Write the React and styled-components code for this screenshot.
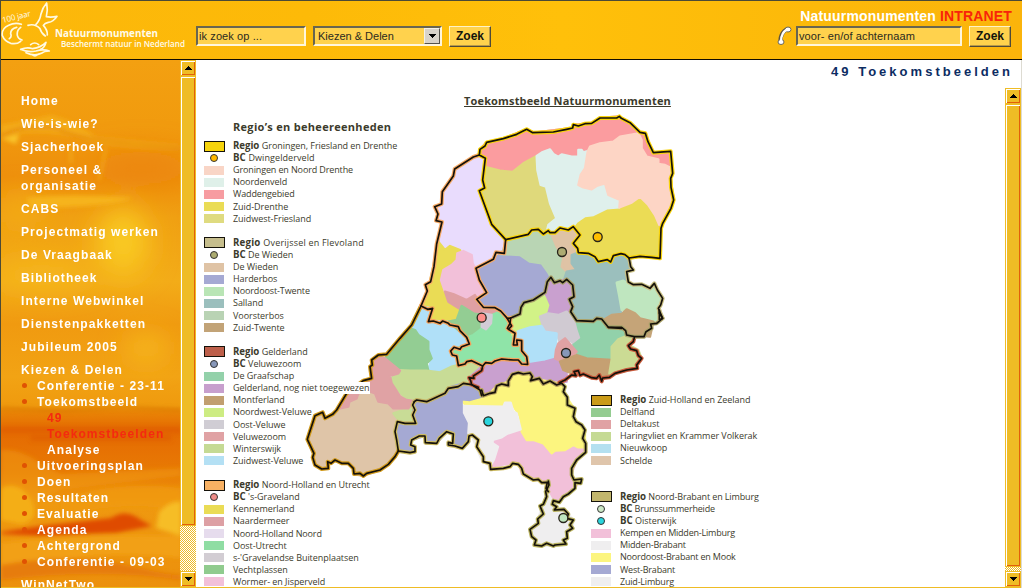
import React from "react";
import styled, { createGlobalStyle, css } from "styled-components";

const GlobalStyle = createGlobalStyle`
  * { box-sizing: border-box; }
  body { margin: 0; overflow: hidden; font-family: "Liberation Sans", Arial, sans-serif; }
`;

const gold = "#efbc25";

const Page = styled.div`
  width: 1022px;
  height: 588px;
  display: flex;
  flex-direction: column;
  border-top: 1px solid #4b4a36;
  border-left: 1px solid #4b4a36;
  background: #fff;
  overflow: hidden;
`;

/* ---------- header ---------- */
const Header = styled.header`
  height: 59px;
  flex: none;
  display: flex;
  border-bottom: 1px solid #120c00;
  background: linear-gradient(90deg, #fcb70b 0, #fdba08 30%, #ffc00a 55%, #fcb90a 80%, #fbb40b 100%);
`;
const Logo = styled.svg`
  width: 195px;
  height: 58px;
  flex: none;
`;
const SearchForm = styled.div`
  display: flex;
  align-items: flex-start;
  padding-top: 25px;
`;
const sunken = css`
  height: 20px;
  flex: none;
  border: 2px solid;
  border-color: #686550 #fff6dc #fff6dc #686550;
  background: #ffd24d;
  color: #2b2a20;
  font-size: 11px;
`;
const Field = styled.div`
  ${sunken}
  width: ${(p) => p.$w}px;
  padding-left: 1px;
  line-height: 16px;
  letter-spacing: ${(p) => p.$ls || 0}px;
  white-space: nowrap;
`;
const Select = styled.div`
  ${sunken}
  width: 129px;
  margin-left: 7px;
  padding-left: 3px;
  line-height: 16px;
  display: flex;
  justify-content: space-between;
`;
const SelectArrow = styled.span`
  width: 16px;
  height: 16px;
  display: flex;
  align-items: center;
  justify-content: center;
  background: #d8d3ca;
  border: 1px solid;
  border-color: #f4f1ea #55534c #55534c #f4f1ea;
`;
const Button = styled.div`
  width: 42px;
  height: 21px;
  flex: none;
  margin-left: 7px;
  border: 1px solid;
  border-color: #fff3c8 #4f4a38 #4f4a38 #fff3c8;
  box-shadow: inset -1px -1px 0 #b79a48;
  background: #ffd24d;
  color: #14140c;
  font-size: 12px;
  font-weight: bold;
  line-height: 18px;
  text-align: center;
`;
const HeaderRight = styled.div`
  margin-left: auto;
  width: 250px;
  padding: 7px 10px 0 0;
`;
const Brand = styled.div`
  height: 18px;
  font-size: 14px;
  line-height: 17px;
  font-weight: bold;
  color: #fff;
  text-align: right;
  white-space: nowrap;
  letter-spacing: 0.16px;
  span { color: #f8240a; }
`;
const PeopleSearch = styled.div`
  display: flex;
  justify-content: flex-end;
  padding-right: 1px;
`;
const Phone = styled.svg`
  width: 16px;
  height: 21px;
  flex: none;
  margin-right: 4px;
`;

/* ---------- frames ---------- */
const Frames = styled.div`
  flex: 1;
  min-height: 0;
  display: flex;
`;
const Sidebar = styled.aside`
  position: relative;
  width: 179px;
  flex: none;
  overflow: hidden;
  background: #f09a10;
  border-bottom: 1px solid ${gold};
`;
const Sky = styled.svg`
  position: absolute;
  inset: 0;
  width: 180px;
  height: 528px;
`;
const Nav = styled.nav`
  position: relative;
  padding: 33px 0 0 20px;
  color: #fff;
  font-size: 12px;
  font-weight: bold;
  line-height: 16px;
  letter-spacing: 1.08px;
`;
const NavItem = styled.div`
  width: ${(p) => p.$w || 158}px;
  margin-bottom: 7px;
`;
const SubItem = styled.div`
  position: relative;
  width: ${(p) => (p.$narrow ? 130 : 158)}px;
  padding-left: ${(p) => (p.$deep ? 26 : 16)}px;
  color: ${(p) => (p.$active ? "#f42a10" : "#fff")};
  &::before {
    content: "";
    display: ${(p) => (p.$deep ? "none" : "block")};
    position: absolute;
    left: 1px;
    top: 5px;
    width: 5px;
    height: 5px;
    border-radius: 50%;
    background: #e05203;
  }
`;
const ScrollRail = styled.div`
  width: 16px;
  flex: none;
  display: flex;
  flex-direction: column;
  background: repeating-conic-gradient(#fff 0 25%, ${gold} 0 50%) 0 0 / 2px 2px;
  border-bottom: 1px solid ${gold};
`;
const bevel = css`
  background: ${gold};
  border: 1px solid ${gold};
  box-shadow: inset 1px 1px 0 #fff, inset -1px -1px 0 #e2600a;
`;
const ScrollButton = styled.div`
  ${bevel}
  height: 16px;
  flex: none;
  display: flex;
  align-items: center;
  justify-content: center;
`;
const Thumb = styled.div`
  ${bevel}
  flex: 1;
  margin-bottom: ${(p) => p.$rest}px;
`;
const Main = styled.main`
  flex: 1;
  min-width: 0;
  display: flex;
  flex-direction: column;
  border-right: 1px solid #dddbd2;
`;
const PageTitle = styled.h1`
  margin: 0;
  height: 28px;
  flex: none;
  padding: 4px 8px 0 0;
  text-align: right;
  font-size: 13px;
  line-height: 16px;
  letter-spacing: 3.02px;
  color: #0c2c62;
`;
const ScrollArea = styled.div`
  flex: 1;
  min-height: 0;
  display: flex;
`;

/* ---------- map sheet ---------- */
const Sheet = styled.section`
  flex: 1;
  min-width: 0;
  overflow: hidden;
  display: grid;
  grid-template-columns: 387px 1fr;
  grid-template-rows: 28px 1fr;
  border-bottom: 1px solid ${gold};
  color: #3c3b2c;
  font-family: "Open Sans", "Noto Sans", sans-serif;
`;
const SheetTitle = styled.h2`
  grid-column: 1 / 3;
  grid-row: 1;
  margin: 0;
  padding: 5px 0 0 268px;
  font-size: 11px;
  line-height: 15px;
  white-space: nowrap;
  letter-spacing: 0.15px;
  text-decoration: underline;
  z-index: 1;
`;
const MapSvg = styled.svg`
  grid-column: 1 / 3;
  grid-row: 1 / 3;
  width: 809px;
  height: 499px;
`;
const LegendColumn = styled.div`
  grid-row: 2;
  grid-column: ${(p) => p.$col};
  z-index: 1;
  padding: ${(p) => p.$top}px 0 0 8px;
  min-height: 0;
`;
const LegendTitle = styled.h3`
  margin: 0 0 6px 29px;
  font-size: 11px;
  line-height: 14px;
  letter-spacing: 0.3px;
`;
const LegendGroup = styled.div`
  margin-bottom: ${(p) => p.$gap || 12.12}px;
`;
const LegendRow = styled.div`
  height: 12.12px;
  display: flex;
  align-items: center;
`;
const Key = styled.span`
  width: 29px;
  flex: none;
  display: flex;
  align-items: center;
`;
const Swatch = styled.i`
  width: ${(p) => (p.$framed ? 21 : 20)}px;
  height: ${(p) => (p.$framed ? 11 : 9)}px;
  background: ${(p) => p.$c};
  border: ${(p) => (p.$framed ? "1.5px solid #15120a" : "0")};
`;
const Dot = styled.i`
  width: 8px;
  height: 8px;
  margin-left: 6px;
  border-radius: 50%;
  border: 1.3px solid #333;
  background: ${(p) => p.$c};
`;
const Label = styled.span`
  font-size: 9px;
  line-height: 12px;
  letter-spacing: ${(p) => p.$ls}px;
  white-space: nowrap;
  background: ${(p) => (p.$plate ? "#fff" : "none")};
  b { font-size: 9.7px; }
`;

const left = [
  [["R", "#f6d40c", "Groningen, Friesland en Drenthe"], ["B", "#ffb900", "Dwingelderveld", 0.08], ["", "#f9d5c6", "Groningen en Noord Drenthe", -0.13], ["", "#dff0e9", "Noordenveld"], ["", "#f79ca1", "Waddengebied", -0.14], ["", "#eadc55", "Zuid-Drenthe"], ["", "#dfdb80", "Zuidwest-Friesland"]],
  [["R", "#c6be8d", "Overijssel en Flevoland", 0.2], ["B", "#acab70", "De Wieden"], ["", "#dfc3a5", "De Wieden"], ["", "#a5a9d3", "Harderbos"], ["", "#b9e5b5", "Noordoost-Twente", -0.12], ["", "#9bbfbd", "Salland"], ["", "#b9d3b4", "Voorsterbos"], ["", "#c2a377", "Zuid-Twente"]],
  [["R", "#bd5f4a", "Gelderland"], ["B", "#8797b9", "Veluwezoom"], ["", "#93d1aa", "De Graafschap"], ["", "#c79fcd", "Gelderland, nog niet toegewezen"], ["", "#c19f70", "Montferland"], ["", "#cdec83", "Noordwest-Veluwe"], ["", "#d0cdd4", "Oost-Veluwe"], ["", "#e0a2a4", "Veluwezoom"], ["", "#c5da94", "Winterswijk"], ["", "#b4e0f4", "Zuidwest-Veluwe"]],
  [["R", "#f8b163", "Noord-Holland en Utrecht"], ["B", "#ef8c88", "'s-Graveland"], ["", "#eadc55", "Kennemerland"], ["", "#dda0a4", "Naardermeer"], ["", "#e6dced", "Noord-Holland Noord", -0.14], ["", "#8fdda3", "Oost-Utrecht"], ["", "#d2cdd3", "s-'Gravelandse Buitenplaatsen"], ["", "#90cb8e", "Vechtplassen"], ["", "#f2c0d9", "Wormer- en Jisperveld"]],
];
const right = [
  [["R", "#ca9b18", "Zuid-Holland en Zeeland"], ["", "#94cc91", "Delfland"], ["", "#e0a2a4", "Deltakust"], ["", "#c5da94", "Haringvliet en Krammer Volkerak"], ["", "#b4e0f0", "Nieuwkoop"], ["", "#dfc5ab", "Schelde"]],
  [["R", "#c2b66d", "Noord-Brabant en Limburg", -0.13], ["B", "#cce8c6", "Brunssummerheide", -0.2], ["B", "#2ad5dd", "Oisterwijk"], ["", "#f2c0d9", "Kempen en Midden-Limburg", -0.21], ["", "#efeeef", "Midden-Brabant", -0.2], ["", "#fcf57f", "Noordoost-Brabant en Mook", -0.2], ["", "#a5a9d3", "West-Brabant", -0.2], ["", "#efeeef", "Zuid-Limburg", -0.2]],
];

function Legend({ groups, gap }) {
  return groups.map((rows, g) => (
    <LegendGroup key={g} $gap={gap}>
      {rows.map(([kind, color, text, spacing = -0.05]) => (
        <LegendRow key={kind + text}>
          <Key>{kind === "B" ? <Dot $c={color} /> : <Swatch $c={color} $framed={kind === "R"} />}</Key>
          <Label $plate={text.includes("nog niet")} $ls={spacing}>
            {kind === "R" && <b>Regio </b>}
            {kind === "B" && <b>BC </b>}
            {text}
          </Label>
        </LegendRow>
      ))}
    </LegendGroup>
  ));
}

/* The map is drawn at three times its size, in three sheets: north, centre, south. */
const NORTH = "translate(1260 270)";
const CENTRE = "translate(900 750)";
const SOUTH = "translate(1320 930)";

const areas = [
  [NORTH, "#ebdc55", "178,195 180,178 200,157 250,146 320,118 342,128 458,114 515,100 540,84 598,79 630,98 660,127 676,130 698,188 752,184 758,250 752,265 761,330 728,400 723,415 720,505 660,499 627,504 603,491 580,497 572,516 535,515 525,500 505,490 475,488 460,460 480,435 460,410 440,422 405,428 355,418 335,420 325,433 257,449 215,403 178,302 194,294 188,270 194,205"],
  [NORTH, "#fb9c9f", "178,195 180,178 200,157 250,146 320,118 342,128 458,114 460,104 515,100 540,84 598,79 660,127 676,130 698,188 752,184 755,235 735,225 715,220 700,200 680,210 650,160 510,190 480,210 390,210 350,200 310,220 278,246 240,242 195,232"],
  [NORTH, "#dfd97b", "192,230 240,242 278,246 310,220 350,198 352,240 362,285 378,290 390,340 409,385 395,400 380,425 330,425 257,449 215,403 178,302 194,294 188,270"],
  [NORTH, "#dff0ec", "350,198 368,186 390,178 400,192 415,200 425,193 455,200 475,200 475,180 485,180 490,187 503,183 503,200 478,280 515,298 545,280 560,290 565,315 600,330 598,352 560,355 520,375 495,378 470,395 460,408 440,422 420,416 405,428 380,425 385,405 409,385 390,340 378,290 362,285 352,240"],
  [NORTH, "#fdd5c5", "503,185 510,170 540,160 580,155 600,140 655,130 665,150 665,175 680,200 715,208 715,222 735,225 755,235 752,265 761,330 728,400 718,405 705,375 685,345 660,320 635,338 598,352 600,330 565,315 555,280 530,288 515,298 490,292 475,285 482,255 495,235"],
  [NORTH, "#e9dcfd", "178,195 160,201 104,237 100,258 67,305 65,342 44,352 54,372 50,393 66,398 55,460 75,480 90,468 115,490 130,483 155,495 163,525 180,540 220,510 228,487 250,490 257,449 215,403 178,302 194,294 188,270 194,205"],
  [NORTH, "#eadc55", "55,455 75,480 90,468 120,480 130,520 110,640 118,650 100,715 85,692 65,700 25,695 38,656 3,648 22,603 16,588 30,575"],
  [NORTH, "#f2c0d9", "112,490 130,483 155,495 158,520 166,535 180,570 200,610 175,630 140,630 100,612 75,605 63,570 70,540 95,525 110,510"],
  [NORTH, "#dfa0a3", "75,605 100,612 140,630 165,615 185,650 225,655 250,678 205,690 175,675 150,672 125,660 85,635"],
  [NORTH, "#a5a9d3", "168,535 220,510 240,492 300,495 330,515 365,520 390,545 385,565 375,600 355,620 310,638 300,672 272,684 262,685 225,653 190,652 170,630 200,610"],
  [NORTH, "#b9d5b4", "257,449 325,433 335,420 355,418 370,432 400,428 395,440 410,470 425,500 425,535 440,545 435,570 420,572 403,578 393,562 385,548 365,520 330,515 300,495 240,492 250,480"],
  [NORTH, "#dfc3a5", "395,435 405,428 440,422 460,410 480,435 460,460 475,488 460,495 455,520 470,540 440,545 425,530 430,505 410,470"],
  [NORTH, "#9bbfbd", "475,488 505,490 525,500 535,515 572,516 580,497 603,491 627,504 632,530 620,545 622,575 590,580 600,640 605,675 550,695 475,692 452,670 448,630 462,625 460,590 432,570 440,545 470,540 455,520 455,495"],
  [NORTH, "#bfe6bf", "590,578 610,572 622,580 665,585 690,595 703,580 712,600 728,625 718,660 726,685 690,695 660,690 645,670 620,660 605,660 598,620"],
  [NORTH, "#c5a478", "550,690 575,675 605,672 620,658 645,670 660,685 700,695 690,740 675,738 625,738 605,715 565,712"],

  [CENTRE, "#dfc5a8", "215,385 140,430 110,480 75,505 68,487 45,497 22,568 42,620 45,645 65,657 85,655 85,635 105,633 145,640 160,655 162,672 190,678 240,660 285,620 295,603 285,545 292,515 340,520 340,455"],
  [CENTRE, "#b0e0f8", "363,168 398,177 385,212 445,215 500,262 508,282 452,300 475,345 455,350 420,365 385,360 395,325 385,270 355,250 330,230"],
  [CENTRE, "#93cd93", "330,235 345,240 355,255 385,275 385,300 395,325 380,340 385,362 330,360 300,362 255,325 280,295"],
  [CENTRE, "#c8dc96", "285,360 330,362 380,362 420,367 455,350 475,345 495,338 545,348 505,385 512,400 490,400 455,410 435,430 380,455 343,455 338,495 345,520 300,515 280,490 325,475 320,445 270,400"],
  [CENTRE, "#e0a2a4", "235,318 255,325 300,362 295,370 270,378 275,400 285,415 300,440 320,450 340,453 325,475 280,475 265,460 235,455 225,430 205,423 175,430 170,445 148,455 145,470 120,475 145,425 215,385 212,350"],
  [CENTRE, "#93cd93", "485,168 520,190 545,195 550,215 540,240 520,255 500,262 445,215 470,210"],
  [CENTRE, "#8fe4a8", "575,195 600,185 622,206 632,220 625,235 645,250 640,262 650,285 665,285 678,315 683,343 640,330 605,330 545,348 515,335 475,345 470,318 452,300 508,282 500,262 520,255 540,240"],
  [CENTRE, "#d2ccd6", "548,190 575,195 573,220 558,238 545,230"],
  [CENTRE, "#d2f287", "622,206 660,195 672,158 705,150 740,137 752,165 745,185 720,200 725,232 690,232 655,243 640,262 632,235"],
  [CENTRE, "#c9a0cf", "742,95 753,82 763,98 780,92 800,88 820,110 825,142 812,150 815,200 800,190 775,195 745,190 752,165 740,137 733,128"],
  [CENTRE, "#d0cad2", "720,200 745,190 775,195 800,185 830,215 840,250 845,285 825,290 815,275 795,270 780,280 770,250 735,245 728,225"],
  [CENTRE, "#b0e0f8", "655,243 690,232 725,228 735,245 770,250 768,290 775,320 735,335 690,343 683,343 678,315 660,285 640,262"],
  [CENTRE, "#c9a0cf", "515,390 505,385 545,350 575,340 605,330 640,330 683,343 735,335 770,325 785,345 800,365 800,395 775,400 735,385 725,400 700,385 670,375 640,372 625,400 590,405 570,430 545,435 530,410"],
  [SOUTH, "#92d1aa", "400,105 425,85 415,55 410,35 480,28 505,50 545,52 565,78 540,85 520,110 515,150 480,155 410,135"],
  [SOUTH, "#e0a2a4", "348,120 355,100 375,85 395,108 410,125 390,145 360,152 345,145"],
  [SOUTH, "#c5a072", "360,155 385,145 410,135 440,145 515,150 510,190 485,212 480,195 455,200 420,185 395,190 370,180"],
  [SOUTH, "#cbdb94", "563,76 583,82 567,105 595,120 605,145 590,170 550,185 508,190 515,148 515,110 535,88"],
  [SOUTH, "#f2c0d9", "150,400 240,360 330,420 430,400 437,425 410,450 395,490 400,510 425,507 400,540 370,560 335,575 320,545 325,520 310,510 245,492 240,470 225,458 150,470 145,450"],
  [SOUTH, "#fcf57f", "65,265 100,270 125,262 150,250 170,228 205,215 215,195 235,190 270,195 275,212 300,210 360,220 380,262 405,300 400,320 435,360 435,412 415,412 400,405 375,420 345,422 335,430 310,400 280,390 260,390 245,365 240,320 215,280 190,290 80,295"],
  [SOUTH, "#efeeef", "66,288 190,290 195,278 212,278 220,305 230,310 242,358 200,372 185,382 158,390 158,400 174,410 162,448 150,470 125,450 110,415 95,375 75,400 70,320"],
  [SOUTH, "#efeeef", "322,545 335,570 340,600 375,600 400,630 398,655 380,665 378,700 345,708 285,705 285,690 270,665 295,625 305,590 315,575"],
  [CENTRE, "#a5a9d3", "343,455 380,455 435,430 455,410 490,400 530,410 545,440 510,450 485,448 485,490 500,520 498,550 508,575 487,595 458,580 460,555 440,545 410,580 378,580 375,558 335,570 332,585 340,608 295,603 285,545 292,515 345,520 338,495"],
];

const borders = [
  [CENTRE, "#cdbb62", "343,455 338,465 345,480 338,495 347,520 315,520 292,515 285,545 290,570 295,603 330,608 345,605 345,590 332,585 335,570 358,558 375,558 376,578 410,580 418,565 440,545 460,552 458,580 445,577 445,585 465,588 487,595 505,575 507,558 517,555 535,570 530,590 550,620 550,635 570,640 572,658 610,655 630,650 638,640 655,643 665,655 670,672 700,690 715,688 725,698 742,697 738,715 745,725"],
  [SOUTH, "#b9b25f", "365,220 375,230 370,245 382,262 382,285 405,295 400,320 408,335 425,345 435,360 428,385 437,400 437,427 410,450 395,475 395,495 402,510 425,507 422,520 405,518 405,535 385,552 370,560 358,577 340,572 337,583 350,590 343,600 372,598 385,612 380,625 400,630 390,645 398,655 380,665 382,685 370,690 378,702 345,705 340,708 320,700 305,708 283,705 288,690 275,680 270,658 295,640 293,627 310,612 300,588 310,583 320,560 317,545 327,525 325,513"],
  [SOUTH, "#b9a35f", "125,240 130,257 150,250 165,247 170,228 185,222 205,227 205,213 217,193 235,188 250,192 270,189 277,200 272,212 298,205 310,222 330,213 350,225 365,220"],
  [CENTRE, "#d19a1c", "363,168 335,225 300,265 260,313 235,315 215,330 217,345 210,350 215,385 190,392 140,430 110,480 98,493 75,505 68,487 45,497 22,568 42,610 38,622 45,645 65,657 85,655 83,635 93,640 105,630 125,640 145,640 160,655 162,672 180,670 190,678 200,670 240,660 265,643 285,620 295,603"],
  [CENTRE, "#c5b264", "343,455 350,450 380,455 435,430 445,415 475,410 490,400 515,404 540,420 545,437"],
  [CENTRE, "#ce6546", "548,348 545,362 520,378 522,385 507,383 512,392 515,404 535,412"],
  [SOUTH, "#c85a3c", "583,83 580,95 565,107 572,117 590,122 595,137 605,145 590,165 592,175 560,180 525,190 508,202 488,204 485,214 478,195 470,205 455,203 430,192 420,196 415,182 402,185 408,197 395,195 375,210 358,218"],
  [NORTH, "#aaa26a", "272,684 300,672 303,652 312,638 340,630 375,607 382,575 393,562 403,578 420,572 428,578 440,568 458,585 462,620 448,628 458,650 452,665 470,692 520,694 530,685 545,687 565,712 605,715"],
  [SOUTH, "#aaa26a", "505,52 545,52 557,62 560,75 583,80 612,80 618,65 635,55 632,42 650,40 668,25 658,10 658,0"],
  [NORTH, "#c9bf83", "627,504 632,530 640,540 620,545 625,576 640,584 665,583 690,595 703,580 712,600 728,625 722,645 715,655 728,685 718,690 718,660"],
  [NORTH, "#f7ab67", "178,195 160,201 104,237 100,258 67,305 65,342 44,350 54,372 48,392 66,396 50,462 42,530 32,575 16,584 22,603 3,648"],
  [NORTH, "#f7ab67", "257,449 253,490 228,487 220,508 168,535 178,570 200,608 170,628 190,652 225,653 242,663 262,685 272,684 270,700 262,715"],
  [CENTRE, "#f7a45d", "363,168 383,178 398,175 385,215 400,213 420,220 428,213 445,220 450,225 475,230 480,242 500,262 508,282 485,290 480,298 462,292 452,303 457,315 470,318 475,347 495,342 500,335 515,332 548,348 557,338 575,340 585,333 605,327 640,330 655,330 665,342 683,343 680,320 665,302 665,272 650,270 652,285 640,285 645,250 625,238 635,228 622,206"],
  [NORTH, "#f9d40a", "257,449 215,403 178,302 194,294 188,270 196,205 178,195 180,178 195,168 200,157 250,146 290,133 320,118 338,128 400,126 440,118 458,114 460,104 475,108 495,101 515,100 540,84 590,84 598,79 604,85 630,98 660,127 676,130 684,155 700,188 752,184 758,250 752,265 753,292 761,330 753,355 728,400 723,415 720,505 695,502 660,499 627,504 615,494 603,491 580,497 572,516 562,509 535,515 525,500 505,490 475,488 473,475 460,460 480,435 460,410 445,420 420,414 405,428 390,428 385,422 370,432 355,418 335,420 325,433 257,449"],
];
const centres = [
  [NORTH, 533, 441, "#ffbf00"], [NORTH, 426, 486, "#acab72"], [NORTH, 185, 683, "#ff8f8b"],
  [CENTRE, 798, 309, "#8797b9"], [CENTRE, 565, 514, "#2ad5dd"], [SOUTH, 370, 624, "#bfe6bf"],
];

function MapDrawing() {
  return (
    <MapSvg viewBox="588 264 2427 1497">
      <g strokeWidth="7" strokeLinejoin="round">
        {areas.map(([t, c, pts], i) => (
          <polygon key={i} transform={t} points={pts} fill={c} stroke={c} />
        ))}
      </g>
      <g fill="none" strokeLinejoin="round" strokeLinecap="round">
        {borders.map(([t, c, pts], i) => (
          <polyline key={i} transform={t} points={pts} stroke={c} strokeWidth="12" />
        ))}
        {borders.map(([t, , pts], i) => (
          <polyline key={i} transform={t} points={pts} stroke="#15110a" strokeWidth="5" />
        ))}
      </g>
      {centres.map(([t, x, y, c], i) => (
        <circle key={i} transform={t} cx={x} cy={y} r="13.5" fill={c} stroke="#27241a" strokeWidth="4" />
      ))}
    </MapSvg>
  );
}

function SunsetSky() {
  return (
    <Sky viewBox="0 0 180 528" preserveAspectRatio="none">
      <defs>
        <linearGradient id="sky" x1="0" y1="0" x2="0" y2="1">
          <stop offset="0" stopColor="#f3a011" />
          <stop offset=".12" stopColor="#f19b0e" />
          <stop offset=".22" stopColor="#ee8f0c" />
          <stop offset=".3" stopColor="#f0a012" />
          <stop offset=".42" stopColor="#f3ac18" />
          <stop offset=".5" stopColor="#f09a10" />
          <stop offset=".6" stopColor="#f2a314" />
          <stop offset=".655" stopColor="#ef9a0e" />
          <stop offset=".665" stopColor="#e98606" />
          <stop offset=".7" stopColor="#e56a02" />
          <stop offset=".78" stopColor="#e87a04" />
          <stop offset=".84" stopColor="#ef9910" />
          <stop offset="1" stopColor="#ec900c" />
        </linearGradient>
        <filter id="soft" x="-50%" y="-50%" width="200%" height="200%"><feGaussianBlur stdDeviation="2" /></filter>
        <filter id="haze" x="-80%" y="-80%" width="260%" height="260%"><feGaussianBlur stdDeviation="14" /></filter>
      </defs>
      <rect width="180" height="528" fill="url(#sky)" />
      <g filter="url(#haze)">
        <ellipse cx="122" cy="182" rx="26" ry="34" fill="#f9ca22" />
        <ellipse cx="40" cy="215" rx="50" ry="12" fill="#f6b91c" />
        <ellipse cx="145" cy="288" rx="20" ry="12" fill="#f8c022" />
        <ellipse cx="140" cy="108" rx="50" ry="16" fill="#ec860b" />
        <ellipse cx="20" cy="150" rx="24" ry="14" fill="#f4ae18" />
      </g>
      <g filter="url(#soft)">
        <path d="M0 65 Q28 60 50 55 Q75 61 95 77 L179 85 L179 90 Q110 88 85 80 Q50 68 0 75Z" fill="#f4b01c" opacity=".75" />
        <path d="M0 76 Q20 64 55 68 Q80 82 179 88" fill="none" stroke="#e07c08" strokeWidth="2" />
        <path d="M0 78 L18 74 L15 84 Z" fill="#f9c42a" />
        <path d="M25 138 Q70 133 132 138 Q110 147 30 148Z" fill="#f6b41c" />
        <path d="M70 85V103M105 88L98 120" stroke="#f5b520" strokeWidth="3" opacity=".6" />
        <path d="M0 390 Q20 388 40 404 L60 414 L180 408 V416 L60 430 L24 446 L0 442Z" fill="#f2a012" opacity=".45" />
        <path d="M0 428 Q18 420 30 440 Q40 460 20 464 L0 460Z" fill="#f4ae18" />
        <path d="M60 440 Q110 420 180 428 V450 Q120 440 60 456Z" fill="#f09a0e" opacity=".8" />
        <path d="M0 472 L40 466 L110 458 Q125 448 140 460 L151 466 L115 473 L40 476 L0 474Z" fill="#df4b02" />
        <path d="M0 483 Q80 472 180 476 V498 Q90 488 0 512Z" fill="#f2a014" />
        <path d="M158 452 Q170 440 180 442 V476 L155 468Z" fill="#f6bd26" />
        <path d="M0 505 Q70 492 130 506 T180 512 V520 Q100 508 0 520Z" fill="#e67b08" />
        <path d="M0 348 L60 351 L120 347 L180 350" stroke="#d97806" strokeWidth="2" fill="none" />
        <path d="M0 370 H180 M30 378 H170" stroke="#de5c02" strokeWidth="6" opacity=".6" />
      </g>
    </Sky>
  );
}

function LogoMark() {
  return (
    <Logo viewBox="1 1 195 58">
      <g transform="scale(0.3333)" fill="none" stroke="#fff9e2" strokeWidth="5" strokeLinecap="round" strokeLinejoin="round">
        <path d="M108 73Q120 62 123 42Q128 22 140 9Q144 28 139 50Q153 53 171 49Q160 66 145 67Q134 69 130 76Q143 90 142 105M84 76Q105 70 120 86Q124 100 136 108" />
        <path d="M64 73Q45 66 26 76Q4 86 7 107Q14 124 32 130Q50 134 62 124M50 82Q31 87 32 102Q36 110 28 116M62 82Q50 90 52 106Q54 116 66 120" />
        <path d="M62 148Q82 140 98 146Q122 143 138 127Q134 143 122 148M62 148Q82 158 108 153Q130 146 148 153Q132 153 124 160Q104 170 78 158M92 134Q104 124 116 134M96 164Q106 172 116 162" />
      </g>
      <g fill="#fffbe9" fontFamily="'Open Sans', sans-serif">
        <text x="3" y="23" fontSize="8" textLength="29" transform="rotate(-14 3 23)">100 jaar</text>
        <text x="55" y="36.5" fontSize="10.5" fontWeight="700" textLength="103" lengthAdjust="spacingAndGlyphs">Natuurmonumenten</text>
        <text x="61" y="47" fontSize="9.5" fontWeight="600" textLength="124" lengthAdjust="spacingAndGlyphs">Beschermt natuur in Nederland</text>
      </g>
    </Logo>
  );
}

const ArrowUp = () => <svg width="8" height="4" shapeRendering="crispEdges"><path d="M0 4L4 0L8 4Z" /></svg>;
const ArrowDown = () => <svg width="8" height="4" shapeRendering="crispEdges"><path d="M0 0H8L4 4Z" /></svg>;

function Scrollbar({ rest }) {
  return (
    <ScrollRail>
      <ScrollButton><ArrowUp /></ScrollButton>
      <Thumb $rest={rest} />
      <ScrollButton><ArrowDown /></ScrollButton>
    </ScrollRail>
  );
}

const menu = ["Home", "Wie-is-wie?", "Sjacherhoek", "Personeel & organisatie", "CABS", "Projectmatig werken", "De Vraagbaak", "Bibliotheek", "Interne Webwinkel", "Dienstenpakketten", "Jubileum 2005"];

export default function App() {
  return (
    <Page>
      <GlobalStyle />
      <Header>
        <LogoMark />
        <SearchForm>
          <Field $w={110} $ls={0.1}>ik zoek op ...</Field>
          <Select>Kiezen &amp; Delen<SelectArrow><ArrowDown /></SelectArrow></Select>
          <Button>Zoek</Button>
        </SearchForm>
        <HeaderRight>
          <Brand>Natuurmonumenten <span>INTRANET</span></Brand>
          <PeopleSearch>
            <Phone viewBox="0 0 16 21">
              <path d="M13 3C8 3 4 9 4.500 16" fill="none" stroke="#5b5340" strokeWidth="4" />
              <ellipse cx="12" cy="3.500" rx="3" ry="2.500" fill="#fff" stroke="#6d6756" />
              <ellipse cx="5" cy="16" rx="3" ry="2.500" fill="#fff" stroke="#6d6756" />
              <path d="M12 3.500C8 4 4.500 10 5 16" fill="none" stroke="#fff" strokeWidth="2.300" />
            </Phone>
            <Field $w={166} $ls={0.1}>voor- en/of achternaam</Field>
            <Button>Zoek</Button>
          </PeopleSearch>
        </HeaderRight>
      </Header>
      <Frames>
        <Sidebar>
          <SunsetSky />
          <Nav>
            {menu.map((m) => <NavItem key={m} $w={m.startsWith("Pers") ? 110 : 158}>{m}</NavItem>)}
            <NavItem>
              Kiezen &amp; Delen
              <SubItem>Conferentie - 23-11</SubItem>
              <SubItem>Toekomstbeeld</SubItem>
              <SubItem $deep $active $narrow>49 Toekomstbeelden</SubItem>
              <SubItem $deep>Analyse</SubItem>
              <SubItem>Uitvoeringsplan</SubItem>
              <SubItem>Doen</SubItem>
              <SubItem>Resultaten</SubItem>
              <SubItem>Evaluatie</SubItem>
              <SubItem>Agenda</SubItem>
              <SubItem>Achtergrond</SubItem>
              <SubItem>Conferentie - 09-03</SubItem>
            </NavItem>
            <NavItem>WinNetTwo</NavItem>
          </Nav>
        </Sidebar>
        <Scrollbar rest={45} />
        <Main>
          <PageTitle>49 Toekomstbeelden</PageTitle>
          <ScrollArea>
            <Sheet>
              <MapDrawing />
              <SheetTitle>Toekomstbeeld Natuurmonumenten</SheetTitle>
              <LegendColumn $col={1} $top={4}>
                <LegendTitle>Regio’s en beheereenheden</LegendTitle>
                <Legend groups={left} />
              </LegendColumn>
              <LegendColumn $col={2} $top={278}>
                <Legend groups={right} gap={24.24} />
              </LegendColumn>
            </Sheet>
            <Scrollbar rest={4} />
          </ScrollArea>
        </Main>
      </Frames>
    </Page>
  );
}
